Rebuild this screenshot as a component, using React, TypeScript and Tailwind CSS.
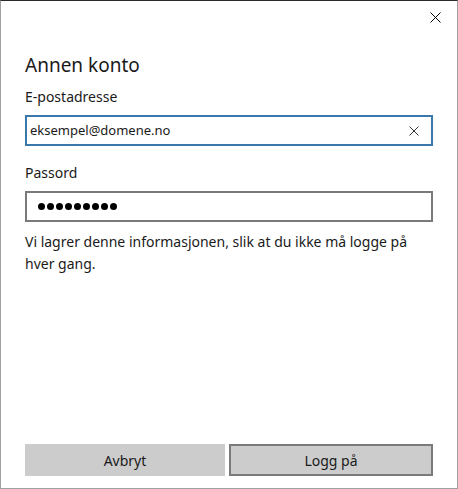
export default function App() {
  return (
    <div className="w-[458px] h-[489px] bg-white border border-[#a0a0a0] border-t-[#2b2b2b] flex flex-col font-['Noto_Sans',sans-serif] text-[#1a1a1a] overflow-hidden">
      {/* Title bar */}
      <div className="h-[32px] flex justify-end items-center pr-[16px]">
        <svg width="11" height="11" viewBox="0 0 11 11" className="text-black">
          <path d="M0.5 0.5L10.5 10.5M10.5 0.5L0.5 10.5" stroke="currentColor" strokeWidth="1" />
        </svg>
      </div>

      <div className="flex-1 flex flex-col px-[24px]">
        <h1 className="text-[19px] leading-[26px] mt-[19px] font-normal">Annen konto</h1>

        <label className="text-[14px] leading-[20px] mt-[9px]">E-postadresse</label>
        <div className="mt-[8px] h-[31px] border-2 border-[#3a77ab] flex items-center pl-[3px] pr-[12px]">
          <span className="flex-1 text-[13px]">eksempel@domene.no</span>
          <svg width="10" height="10" viewBox="0 0 10 10" className="text-[#333]">
            <path d="M0.5 0.5L9.5 9.5M9.5 0.5L0.5 9.5" stroke="currentColor" strokeWidth="1" />
          </svg>
        </div>

        <label className="text-[14px] leading-[20px] mt-[17px]">Passord</label>
        <div className="mt-[8px] h-[31px] border-2 border-[#7a7a7a] flex items-center pl-[11px] gap-[2px]">
          {Array.from({ length: 9 }).map((_, i) => (
            <span key={i} className="w-[7px] h-[7px] rounded-full bg-black" />
          ))}
        </div>

        <p className="text-[14px] leading-[22px] mt-[9px]">
          Vi lagrer denne informasjonen, slik at du ikke må logge på hver gang.
        </p>

        <div className="mt-auto mb-[12px] flex gap-[4px]">
          <button className="flex-1 h-[32px] bg-[#cccccc] text-[14px]">Avbryt</button>
          <button className="flex-1 h-[32px] bg-[#cccccc] border-2 border-[#7a7a7a] text-[14px]">Logg på</button>
        </div>
      </div>
    </div>
  )
}
